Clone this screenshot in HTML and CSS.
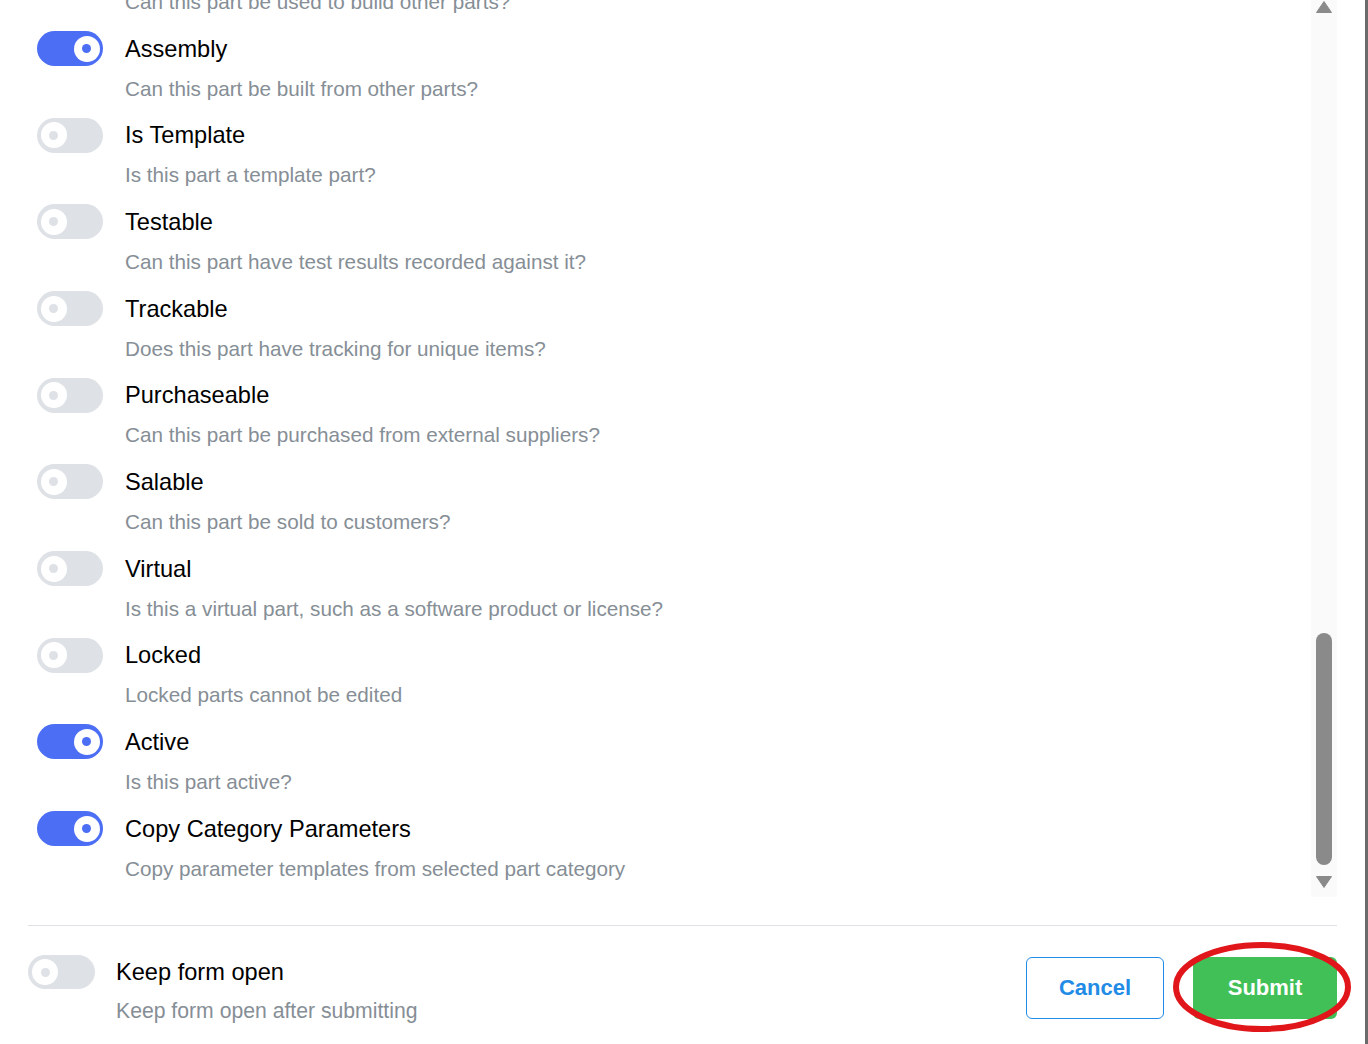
FILE: index.html
```html
<!DOCTYPE html>
<html lang="en">
<head>
<meta charset="utf-8">
<title>Part form</title>
<link rel="stylesheet" href="styles.css">
</head>
<body>
<div class="page">
  <div class="modal">
    <div class="scroll-area">
      <div class="scroll-content">
        <div class="desc partial">Can this part be used to build other parts?</div>

        <div class="field">
          <span class="switch on"><span class="knob"></span></span>
          <div class="title">Assembly</div>
          <div class="desc">Can this part be built from other parts?</div>
        </div>
        <div class="field">
          <span class="switch"><span class="knob"></span></span>
          <div class="title">Is Template</div>
          <div class="desc">Is this part a template part?</div>
        </div>
        <div class="field">
          <span class="switch"><span class="knob"></span></span>
          <div class="title">Testable</div>
          <div class="desc">Can this part have test results recorded against it?</div>
        </div>
        <div class="field">
          <span class="switch"><span class="knob"></span></span>
          <div class="title">Trackable</div>
          <div class="desc">Does this part have tracking for unique items?</div>
        </div>
        <div class="field">
          <span class="switch"><span class="knob"></span></span>
          <div class="title">Purchaseable</div>
          <div class="desc">Can this part be purchased from external suppliers?</div>
        </div>
        <div class="field">
          <span class="switch"><span class="knob"></span></span>
          <div class="title">Salable</div>
          <div class="desc">Can this part be sold to customers?</div>
        </div>
        <div class="field">
          <span class="switch"><span class="knob"></span></span>
          <div class="title">Virtual</div>
          <div class="desc">Is this a virtual part, such as a software product or license?</div>
        </div>
        <div class="field">
          <span class="switch"><span class="knob"></span></span>
          <div class="title">Locked</div>
          <div class="desc">Locked parts cannot be edited</div>
        </div>
        <div class="field">
          <span class="switch on"><span class="knob"></span></span>
          <div class="title">Active</div>
          <div class="desc">Is this part active?</div>
        </div>
        <div class="field">
          <span class="switch on"><span class="knob"></span></span>
          <div class="title">Copy Category Parameters</div>
          <div class="desc">Copy parameter templates from selected part category</div>
        </div>
      </div>
      <div class="scrollbar">
        <svg class="arrow up" width="16" height="12" viewBox="0 0 16 12"><path d="M8 0.5 L15.5 11.5 L0.5 11.5 Z" fill="#8a8a8a" stroke="#8a8a8a" stroke-linejoin="round"/></svg>
        <div class="track"><div class="thumb"></div></div>
        <svg class="arrow down" width="16" height="12" viewBox="0 0 16 12"><path d="M0.5 0.5 L15.5 0.5 L8 11.5 Z" fill="#8a8a8a" stroke="#8a8a8a" stroke-linejoin="round"/></svg>
      </div>
    </div>

    <div class="footer">
      <div class="field keep">
        <span class="switch big"><span class="knob"></span></span>
        <div class="title">Keep form open</div>
        <div class="desc">Keep form open after submitting</div>
      </div>
      <div class="buttons">
        <button class="btn cancel" type="button">Cancel</button>
        <button class="btn submit" type="button">Submit</button>
      </div>
    </div>
  </div>
  <div class="edge"></div>
</div>
<svg class="highlight" width="184" height="96" viewBox="0 0 184 96"><ellipse cx="92" cy="48" rx="86" ry="42" fill="none" stroke="#e0161b" stroke-width="6"/></svg>
</body>
</html>
```

FILE: styles.css
```css
html, body {
  margin: 0;
  padding: 0;
  background: #ffffff;
}

body {
  font-family: "Liberation Sans", Arial, sans-serif;
  color: #000000;
  overflow: hidden;
}

.page {
  display: flex;
  width: 1368px;
  height: 1044px;
}

.modal {
  width: 1365px;
  box-sizing: border-box;
  padding: 0 28px;
  display: flex;
  flex-direction: column;
}

.edge {
  width: 3px;
  background: #6b6b6b;
}

.scroll-area {
  display: flex;
  height: 897px;
}

.scroll-content {
  flex: 1;
  overflow: hidden;
  padding-left: 9px;
  display: flex;
  flex-direction: column;
  gap: 15.17px;
}

.partial {
  margin-top: -12px;
  margin-left: 88px;
}

.field {
  display: grid;
  grid-template-columns: 66px auto;
  column-gap: 22px;
  row-gap: 8.5px;
  align-items: center;
  justify-content: start;
}

.field .switch {
  grid-row: 1;
  grid-column: 1;
}

.field .title {
  grid-row: 1;
  grid-column: 2;
}

.field .desc {
  grid-row: 2;
  grid-column: 2;
}

.title {
  font-size: 23.6px;
  line-height: 30px;
  color: #000000;
}

.desc {
  font-size: 20.7px;
  line-height: 28px;
  color: #868e96;
  white-space: nowrap;
}

.keep .desc {
  font-size: 21.2px;
}

.switch {
  box-sizing: border-box;
  width: 66px;
  height: 35px;
  border-radius: 18px;
  background: #dee2e6;
  display: flex;
  align-items: center;
  justify-content: flex-start;
  padding: 0 3.5px;
}

.switch.on {
  background: #4c6ef5;
  justify-content: flex-end;
}

.knob {
  width: 26px;
  height: 26px;
  border-radius: 50%;
  background: #ffffff;
  display: grid;
  place-items: center;
}

.knob::after {
  content: "";
  width: 9px;
  height: 9px;
  border-radius: 50%;
  background: #dee2e6;
}

.switch.on .knob::after {
  background: #4c6ef5;
}

.scrollbar {
  width: 26px;
  background: #fafafa;
  display: flex;
  flex-direction: column;
  align-items: center;
}

.arrow.up {
  margin-top: 1px;
}

.track {
  flex: 1;
  display: flex;
  flex-direction: column;
  justify-content: flex-end;
  align-items: center;
  padding-bottom: 11px;
}

.thumb {
  width: 16px;
  height: 232px;
  border-radius: 8px;
  background: #8a8a8a;
}

.arrow.down {
  margin-bottom: 9px;
}

.footer {
  margin-top: 28px;
  border-top: 1px solid #dee2e6;
  padding-top: 29px;
  display: flex;
  justify-content: space-between;
  align-items: flex-start;
}

.field.keep {
  grid-template-columns: 67px auto;
  column-gap: 21px;
  row-gap: 8px;
}

.switch.big {
  width: 67px;
  height: 34px;
  padding: 0 4px;
}

.buttons {
  margin-top: 2px;
  display: flex;
  gap: 29px;
}

.btn {
  font-family: "Liberation Sans", Arial, sans-serif;
  font-size: 22px;
  font-weight: 700;
  height: 62px;
  border-radius: 6px;
  cursor: pointer;
  padding: 0;
}

.cancel {
  width: 138px;
  background: #ffffff;
  border: 1px solid #228be6;
  color: #228be6;
}

.submit {
  width: 144px;
  background: #40c057;
  border: none;
  color: #ffffff;
}

.highlight {
  position: absolute;
  left: 1170px;
  top: 939px;
}
```
